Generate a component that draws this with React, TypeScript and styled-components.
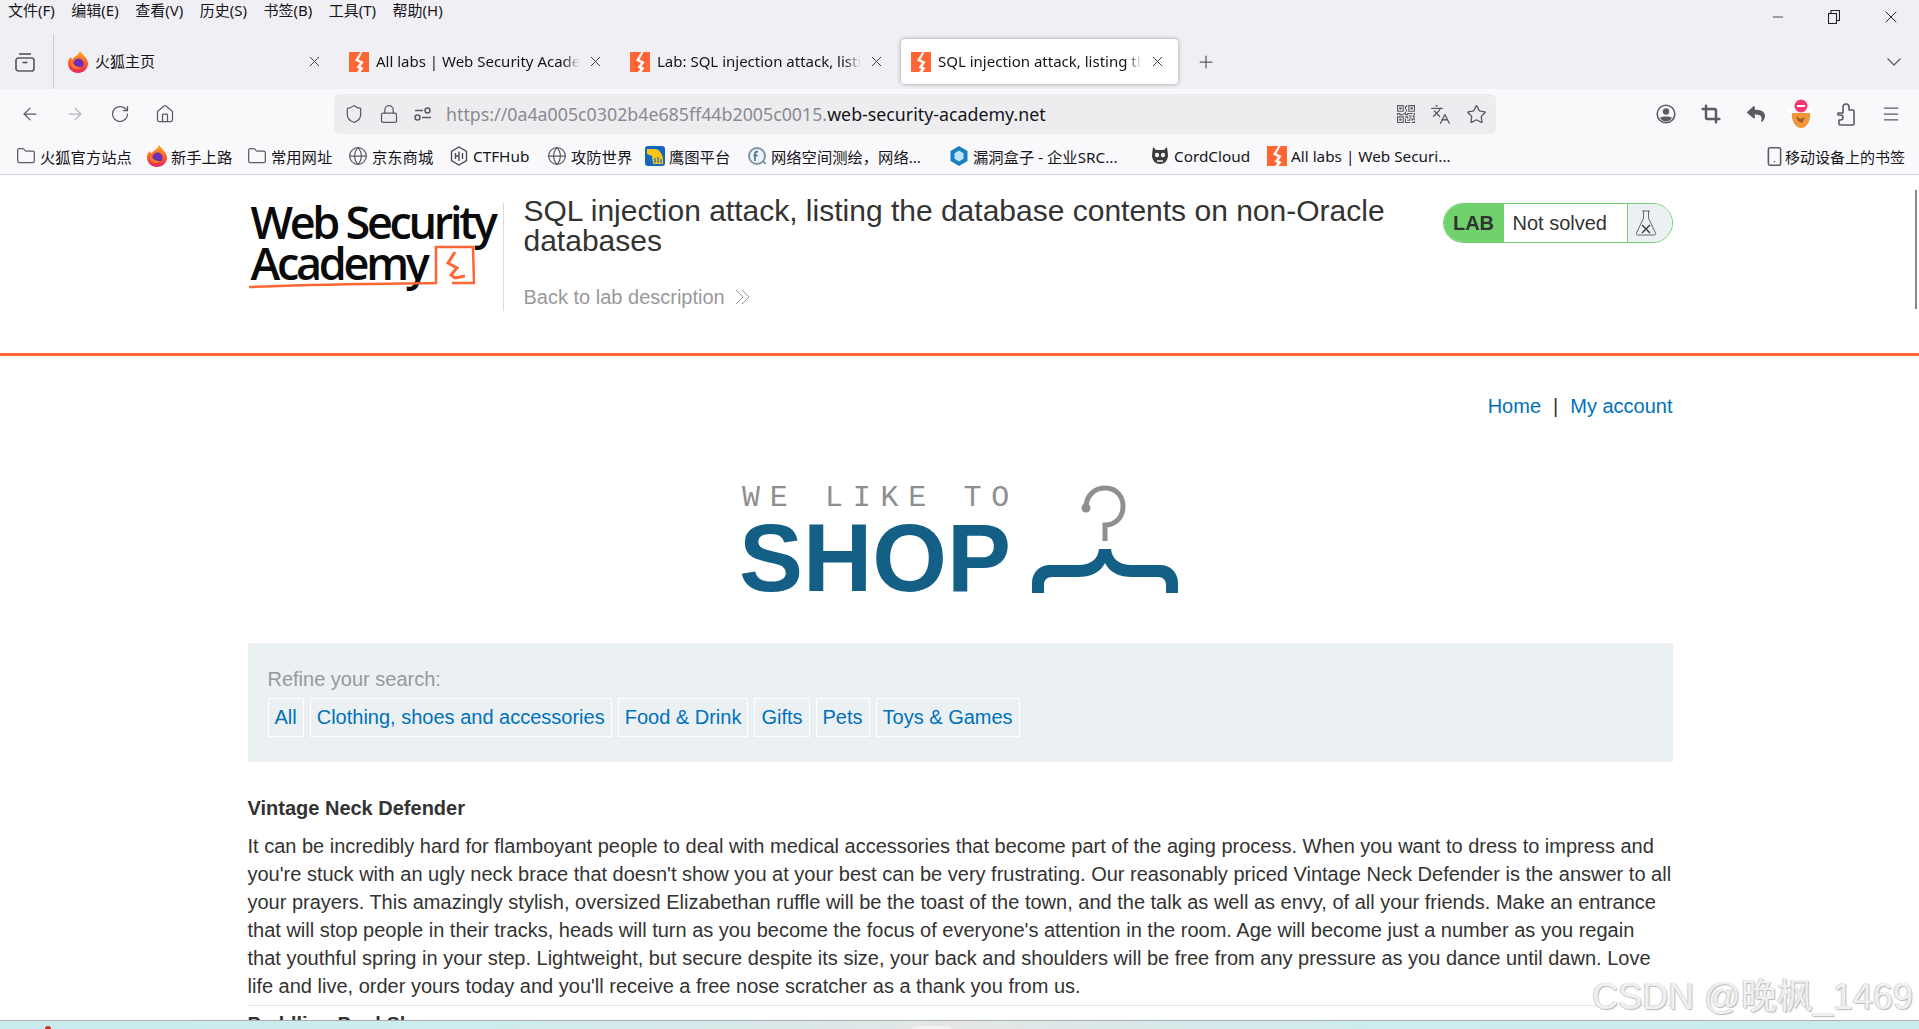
import React from 'react'
import styled, { createGlobalStyle } from 'styled-components'
import {
  ArrowLeft, ArrowRight, RotateCw, Home, Shield, Lock, Star, Languages, X, Plus,
  ChevronDown, Menu, Minus, Folder, Globe, Smartphone, Crop,
} from 'lucide-react'
import { FaReply } from 'react-icons/fa'
import { BsQrCode } from 'react-icons/bs'

const CHROME_FONT = `"Noto Sans", "Noto Sans CJK SC", sans-serif`
const PAGE_FONT = `"Liberation Sans", Arial, sans-serif`

const GlobalStyle = createGlobalStyle`
  html, body {
    margin: 0;
    padding: 0;
    height: 100%;
    overflow: hidden;
    background: #fff;
  }
  #root { height: 100%; }
`

const menus = ['文件(F)', '编辑(E)', '查看(V)', '历史(S)', '书签(B)', '工具(T)', '帮助(H)']
const categories = ['All', 'Clothing, shoes and accessories', 'Food & Drink', 'Gifts', 'Pets', 'Toys & Games']

const FoxIcon = () => (
  <svg width='20' height='22' viewBox='0 0 20 22'>
    <defs>
      <linearGradient id='foxBody' x1='0' y1='0' x2='0' y2='1'>
        <stop offset='0' stopColor='#ffb01f' />
        <stop offset='0.55' stopColor='#ff5a2b' />
        <stop offset='1' stopColor='#e0285f' />
      </linearGradient>
    </defs>
    <path d='M12 0c1 2 3 3 4.500 5.500C18.800 8 20 10 20 12.500 20 18 15.500 22 10 22S0 18 0 12.500C0 9.500 1.500 7 3 6c0 1 .5 2 1.500 2.500C6 5.500 10 5 12 0z' fill='url(#foxBody)' />
    <circle cx='10.500' cy='12.500' r='5' fill='#6b2fb5' />
    <path d='M3 9c2 4 5 8 11 7-3 3-9 3-11-2z' fill='#ff7a1f' />
  </svg>
)

const AcademyFavicon = () => (
  <svg width='20' height='20' viewBox='0 0 20 20'>
    <rect width='20' height='20' fill='#ff6633' />
    <path d='M11.500 0 6 8.500l5 2.500-3.500 4.500 3 1.500L8 20h3.500l3-4-3-1.500 3-4.500-5-2.500L13.500 0z' fill='#fff' />
  </svg>
)

const TabListIcon = () => (
  <svg width='20' height='20' viewBox='0 0 20 20' fill='none' stroke='#5b5b66' strokeWidth='1.700'>
    <path d='M4 2h12' />
    <rect x='1' y='6' width='18' height='13' rx='2.500' />
    <path d='M7.500 10.500h5' />
  </svg>
)

const SlidersIcon = () => (
  <svg width='18' height='14' viewBox='0 0 18 14' fill='none' stroke='#5b5b66' strokeWidth='1.500'>
    <circle cx='13.500' cy='3.500' r='2.500' />
    <path d='M1 3.500h8' />
    <circle cx='3.500' cy='10.500' r='2.500' />
    <path d='M8 10.500h9' />
  </svg>
)

const RestoreIcon = () => (
  <svg width='12' height='14' viewBox='0 0 12 14' fill='none' stroke='#222' strokeWidth='1.100'>
    <rect x='.5' y='3.500' width='8' height='10' />
    <path d='M3 3.500V.5h8.500v10H8.500' />
  </svg>
)

const AvatarIcon = () => (
  <svg width='20' height='20' viewBox='0 0 20 20'>
    <circle cx='10' cy='10' r='8.800' fill='none' stroke='#5b5b66' strokeWidth='1.600' />
    <circle cx='10' cy='7.500' r='3.200' fill='#5b5b66' />
    <path d='M4 13.500c2-1.500 10-1.500 12 0-1 2.500-3.500 4-6 4s-5-1.500-6-4z' fill='#5b5b66' />
  </svg>
)

const ExtensionIcon = () => (
  <svg width='20' height='24' viewBox='0 0 20 24' fill='none' stroke='#5b5b66' strokeWidth='1.600' strokeLinejoin='round'>
    <path d='M2 11h5V5a3 3 0 0 1 6 0v3h4c.6 0 1 .4 1 1v13c0 .6-.4 1-1 1H4c-.6 0-1-.4-1-1v-4h1.500a2.500 2.500 0 0 0 0-5H2z' />
  </svg>
)

const CtfIcon = () => (
  <svg width='18' height='20' viewBox='0 0 18 20' fill='none' stroke='#4a4a52' strokeWidth='1.400'>
    <path d='M9 1l7.500 4.300v9.400L9 19l-7.500-4.300V5.300z' />
    <path d='M5.500 7v6M9 5.500V15M12.500 7v6M5.500 10h3.500' />
  </svg>
)

const AddonIcon = () => (
  <svg width='24' height='32' viewBox='0 0 24 32'>
    <path d='M3 15h18c1 7-3 15-9 15S2 22 3 15z' fill='#f0973a' />
    <path d='M7 18l4 3 5-2-3 6-4-2z' fill='#9a5a20' />
    <rect x='0' y='9' width='24' height='6' fill='#fff' />
    <circle cx='12' cy='8' r='6.500' fill='#f7396f' />
    <rect x='8' y='7' width='8' height='2' fill='#fff' />
  </svg>
)

const YingtuIcon = () => (
  <svg width='20' height='20' viewBox='0 0 20 20'>
    <rect width='20' height='20' rx='3' fill='#1665c1' />
    <path d='M2 3h9c4 1 6 5 7 9v6H8l-1-8-5-2z' fill='#f5c518' />
    <path d='M10 12v5M13 11v6M16 13v4' stroke='#1665c1' strokeWidth='1.200' />
  </svg>
)

const FofaIcon = () => (
  <svg width='20' height='20' viewBox='0 0 20 20'>
    <circle cx='10' cy='10' r='8' fill='#eef3f5' stroke='#7d97a5' strokeWidth='2' />
    <path d='M8 15V7.500c0-1.500 1-2 3-2M6.500 9.500h4' fill='none' stroke='#4f7d96' strokeWidth='1.800' />
    <path d='M16 15l2.500 3' stroke='#7d97a5' strokeWidth='2' />
  </svg>
)

const BoxIcon = () => (
  <svg width='18' height='20' viewBox='0 0 18 20'>
    <path d='M9 0l8.500 5v10L9 20 .5 15V5z' fill='#1c7fc4' />
    <path d='M9 4.500l4.500 2.700v5.600L9 15.500l-4.500-2.700V7.200z' fill='#bfe6f7' />
  </svg>
)

const CordIcon = () => (
  <svg width='18' height='20' viewBox='0 0 18 20'>
    <path d='M2 1l3 3h8l3-3 1 8c0 5-3 9-8 9s-8-4-8-9z' fill='#3b3b3b' />
    <circle cx='6' cy='9' r='2.200' fill='#eee' />
    <circle cx='12' cy='9' r='2.200' fill='#eee' />
    <path d='M6 14h6v2H6z' fill='#ccc' />
  </svg>
)

const chromeIcon = { size: 20, color: '#5b5b66', strokeWidth: 1.500 }
const bookmarkIcon = { size: 20, color: '#5b5b66', strokeWidth: 1.500 }

const bookmarks = [
  { label: '火狐官方站点', width: 131, icon: <Folder {...bookmarkIcon} /> },
  { label: '新手上路', width: 100, icon: <FoxIcon /> },
  { label: '常用网址', width: 101, icon: <Folder {...bookmarkIcon} /> },
  { label: '京东商城', width: 101, icon: <Globe {...bookmarkIcon} /> },
  { label: 'CTFHub', width: 98, icon: <CtfIcon /> },
  { label: '攻防世界', width: 98, icon: <Globe {...bookmarkIcon} /> },
  { label: '鹰图平台', width: 102, icon: <YingtuIcon /> },
  { label: '网络空间测绘，网络...', width: 202, icon: <FofaIcon /> },
  { label: '漏洞盒子 - 企业SRC...', width: 201, icon: <BoxIcon /> },
  { label: 'CordCloud', width: 117, icon: <CordIcon /> },
  { label: 'All labs | Web Securi...', width: 190, icon: <AcademyFavicon /> },
]

const tabs = [
  { title: '火狐主页', icon: <FoxIcon />, fade: false },
  { title: 'All labs | Web Security Academy', icon: <AcademyFavicon />, fade: true },
  { title: 'Lab: SQL injection attack, listing', icon: <AcademyFavicon />, fade: true },
  { title: 'SQL injection attack, listing the', icon: <AcademyFavicon />, fade: true, active: true },
]

const App = (): JSX.Element => {
  return (
    <Screen>
      <GlobalStyle />

      <Chrome>
        <TitleRow>
          <MenuBar>
            {menus.map((m) => <MenuItem key={m}>{m}</MenuItem>)}
          </MenuBar>
          <WindowControls>
            <WindowButton><Minus size={16} color='#222' strokeWidth={1.200} /></WindowButton>
            <WindowButton><RestoreIcon /></WindowButton>
            <WindowButton><X size={20} color='#222' strokeWidth={1.200} /></WindowButton>
          </WindowControls>
        </TitleRow>

        <TabRow>
          <TabListButton><TabListIcon /></TabListButton>
          <TabStrip>
            {tabs.map((t) => (
              <Tab key={t.title} $active={t.active}>
                <TabIcon>{t.icon}</TabIcon>
                <TabTitle $fade={t.fade}>{t.title}</TabTitle>
                <X size={17} color='#3a3a42' strokeWidth={1.400} />
              </Tab>
            ))}
          </TabStrip>
          <NewTab><Plus size={20} color='#5b5b66' strokeWidth={1.500} /></NewTab>
          <TabOverflow><ChevronDown size={24} color='#5b5b66' strokeWidth={1.300} /></TabOverflow>
        </TabRow>

        <Toolbar>
          <NavGroup>
            <NavButton><ArrowLeft {...chromeIcon} /></NavButton>
            <NavButton><ArrowRight {...chromeIcon} color='#b4b4ba' /></NavButton>
            <NavButton><RotateCw {...chromeIcon} /></NavButton>
            <NavButton><Home {...chromeIcon} /></NavButton>
          </NavGroup>
          <UrlBar>
            <UrlIcons>
              <Shield size={20} color='#5b5b66' strokeWidth={1.500} />
              <Lock size={20} color='#5b5b66' strokeWidth={1.500} />
              <SlidersIcon />
            </UrlIcons>
            <UrlText>
              <UrlMuted>https://0a4a005c0302b4e685ff44b2005c0015.</UrlMuted>web-security-academy.net
            </UrlText>
            <UrlActions>
              <BsQrCode size={18} color='#5b5b66' />
              <Languages size={21} color='#5b5b66' strokeWidth={1.500} />
              <Star size={21} color='#5b5b66' strokeWidth={1.500} />
            </UrlActions>
          </UrlBar>
          <ToolActions>
            <ToolButton><AvatarIcon /></ToolButton>
            <ToolButton><Crop size={20} color='#5b5b66' strokeWidth={3} /></ToolButton>
            <ToolButton><FaReply size={18} color='#5b5b66' /></ToolButton>
            <ToolButton><AddonIcon /></ToolButton>
            <ToolButton><ExtensionIcon /></ToolButton>
            <ToolButton><Menu {...chromeIcon} /></ToolButton>
          </ToolActions>
        </Toolbar>

        <BookmarkBar>
          <BookmarkList>
            {bookmarks.map((b) => (
              <Bookmark key={b.label} $width={b.width}>
                <BookmarkIcon>{b.icon}</BookmarkIcon>
                {b.label}
              </Bookmark>
            ))}
          </BookmarkList>
          <MobileBookmarks>
            <Smartphone size={21} color='#5b5b66' strokeWidth={1.800} />
            移动设备上的书签
          </MobileBookmarks>
        </BookmarkBar>
      </Chrome>

      <Page>
        <AcademyHeader>
          <HeaderInner>
            <LogoBlock>
              <Logo>
                <LogoLine>Web Security</LogoLine>
                <LogoLine>Academy</LogoLine>
                <LogoMark width='226' height='44' viewBox='0 0 226 44' fill='none'>
                  <path d='M0 42c60-3 125-3 187-4V2h37l1 36h-22' stroke='#ff6633' strokeWidth='2.500' />
                  <path d='M206 7l-7 11 9 5-6 7 4 3 10-2' stroke='#ff6633' strokeWidth='3' />
                </LogoMark>
              </Logo>
              <LogoDivider />
            </LogoBlock>
            <TitleBlock>
              <LabTitle>SQL injection attack, listing the database contents on non-Oracle databases</LabTitle>
              <BackLink>
                Back to lab description
                <svg width='16' height='16' viewBox='0 0 16 16' fill='none' stroke='#999' strokeWidth='1'>
                  <path d='M1 1l7 7-7 7M7 1l7 7-7 7' />
                </svg>
              </BackLink>
            </TitleBlock>
            <LabBadge>
              <LabTag>LAB</LabTag>
              <LabState>Not solved</LabState>
              <LabFlask>
                <svg width='22' height='26' viewBox='0 0 22 26' fill='none' stroke='#666' strokeWidth='1'>
                  <path d='M7 1h8M8.500 1v7L1.500 23c-.5 1 0 2 1 2h17c1 0 1.500-1 1-2l-7-15V1' />
                  <path d='M7 15l8 8M15 15l-8 8' stroke='#333' strokeWidth='1.300' />
                </svg>
              </LabFlask>
            </LabBadge>
          </HeaderInner>
        </AcademyHeader>

        <Container>
          <TopLinks>
            <TopLink>Home</TopLink>
            <TopSep>|</TopSep>
            <TopLink>My account</TopLink>
          </TopLinks>

          <ShopLogo>
            <ShopWords>
              <ShopSmall>WE LIKE TO</ShopSmall>
              <ShopBig>SHOP</ShopBig>
            </ShopWords>
            <svg width='146' height='108' viewBox='0 0 146 108'>
              <circle cx='54' cy='23' r='4.500' fill='#8f8f8f' />
              <path d='M54 23C54 10 63 3 73 3c12 0 18 9 18 18 0 12-8 19-18 19v16' fill='none' stroke='#8f8f8f' strokeWidth='5' />
              <path d='M67 64h12c1 10 8 16 21 16h28c11 0 18 8 18 18v10h-12v-8c0-5-3-8-8-8h-26c-12 0-22-4-27-14-5 10-15 14-27 14H20c-5 0-8 3-8 8v8H0V98c0-10 7-18 18-18h28c13 0 20-6 21-16z' fill='#135f85' />
            </svg>
          </ShopLogo>

          <FilterBox>
            <FilterLabel>Refine your search:</FilterLabel>
            <FilterList>
              {categories.map((c) => <FilterLink key={c}>{c}</FilterLink>)}
            </FilterList>
          </FilterBox>

          <ProductName>Vintage Neck Defender</ProductName>
          <ProductText>
            It can be incredibly hard for flamboyant people to deal with medical accessories that become part of the aging process. When you want to dress to impress and you're stuck with an ugly neck brace that doesn't show you at your best can be very frustrating. Our reasonably priced Vintage Neck Defender is the answer to all your prayers. This amazingly stylish, oversized Elizabethan ruffle will be the toast of the town, and the talk as well as envy, of all your friends. Make an entrance that will stop people in their tracks, heads will turn as you become the focus of everyone's attention in the room. Age will become just a number as you regain that youthful spring in your step. Lightweight, but secure despite its size, your back and shoulders will be free from any pressure as you dance until dawn. Love life and live, order yours today and you'll receive a free nose scratcher as a thank you from us.
          </ProductText>
          <Rule />
          <NextProduct>Paddling Pool Shoes</NextProduct>
        </Container>

        <ScrollThumb />
        <Watermark>CSDN @晚枫_1469</Watermark>
      </Page>

      <Taskbar>
        <TaskbarDot />
        <TaskbarTab />
      </Taskbar>
    </Screen>
  )
}

export default App

const Screen = styled.div`
  height: 100vh;
  display: flex;
  flex-direction: column;
  overflow: hidden;
`

const Chrome = styled.header`
  flex: none;
  background: #f0f0f4;
  font-family: ${CHROME_FONT};
  color: #15141a;
`

const TitleRow = styled.div`
  height: 34px;
  display: flex;
  justify-content: space-between;
`

const MenuBar = styled.nav`
  display: flex;
  gap: 16.500px;
  padding-left: 8px;
  height: 18px;
  align-items: center;
`

const MenuItem = styled.span`
  font-size: 15px;
  white-space: nowrap;
`

const WindowControls = styled.div`
  display: flex;
  align-items: center;
`

const WindowButton = styled.div`
  width: 56.500px;
  height: 34px;
  display: flex;
  align-items: center;
  justify-content: center;
`

const TabRow = styled.div`
  height: 55px;
  display: flex;
  align-items: flex-start;
`

const TabListButton = styled.div`
  width: 49px;
  height: 55px;
  padding-right: 4px;
  display: flex;
  align-items: center;
  justify-content: center;
  border-right: 1px solid #c9c9cf;
`

const TabStrip = styled.div`
  display: flex;
  gap: 4px;
  padding: 5px 0 0 4px;
`

const Tab = styled.div<{ $active?: boolean }>`
  width: 277px;
  height: 45px;
  box-sizing: border-box;
  padding: 0 12px 0 10px;
  display: flex;
  align-items: center;
  gap: 7px;
  border-radius: 4px;
  background: ${({ $active }) => ($active ? '#fff' : 'transparent')};
  box-shadow: ${({ $active }) => ($active ? '0 0 4px rgba(0, 0, 0, 0.35)' : 'none')};
`

const TabIcon = styled.span`
  flex: none;
  width: 20px;
  height: 22px;
  display: flex;
  align-items: center;
`

const TabTitle = styled.span<{ $fade?: boolean }>`
  flex: 1;
  min-width: 0;
  font-size: 15px;
  line-height: 22px;
  margin-top: -2px;
  white-space: nowrap;
  overflow: hidden;
  ${({ $fade }) => $fade && `
    mask-image: linear-gradient(to right, #000 92%, transparent 100%);
  `}
`

const NewTab = styled.div`
  margin-left: 18px;
  height: 55px;
  display: flex;
  align-items: center;
`

const TabOverflow = styled.div`
  margin-left: auto;
  width: 50px;
  height: 55px;
  display: flex;
  align-items: center;
  justify-content: center;
`

const Toolbar = styled.div`
  height: 50px;
  padding: 5px 0;
  box-sizing: border-box;
  background: #f9f9fb;
  display: flex;
  align-items: center;
`

const NavGroup = styled.div`
  width: 334px;
  display: flex;
  padding-left: 8px;
  box-sizing: border-box;
`

const NavButton = styled.div`
  width: 44.800px;
  height: 40px;
  display: flex;
  align-items: center;
  justify-content: center;
`

const UrlBar = styled.div`
  width: 1162px;
  height: 40px;
  border-radius: 6px;
  background: #ededf0;
  display: flex;
  align-items: center;
`

const UrlIcons = styled.div`
  display: flex;
  align-items: center;
  gap: 15px;
  padding-left: 10px;
  width: 112px;
  box-sizing: border-box;
`

const UrlText = styled.div`
  flex: 1;
  font-size: 17.800px;
  white-space: nowrap;
`

const UrlMuted = styled.span`
  color: #8a8a90;
`

const UrlActions = styled.div`
  display: flex;
  align-items: center;
  gap: 15px;
  padding-right: 9px;
`

const ToolActions = styled.div`
  flex: 1;
  display: flex;
  justify-content: flex-end;
  align-items: center;
  padding-right: 6px;
`

const ToolButton = styled.div`
  width: 45px;
  height: 40px;
  display: flex;
  align-items: center;
  justify-content: center;
`

const BookmarkBar = styled.div`
  height: 36px;
  padding: 0 14px 1px 16px;
  box-sizing: border-box;
  background: #f9f9fb;
  border-bottom: 1px solid #cfcfd8;
  display: flex;
  align-items: center;
  justify-content: space-between;
  font-size: 15.300px;
`

const BookmarkList = styled.div`
  display: flex;
`

const Bookmark = styled.div<{ $width: number }>`
  width: ${({ $width }) => $width}px;
  display: flex;
  align-items: center;
  gap: 4px;
  white-space: nowrap;
`

const BookmarkIcon = styled.span`
  flex: none;
  width: 20px;
  display: flex;
  justify-content: center;
`

const MobileBookmarks = styled.div`
  display: flex;
  align-items: center;
  white-space: nowrap;
  font-size: 15px;
`

const Page = styled.main`
  position: relative;
  flex: 1;
  min-height: 0;
  overflow: hidden;
  background: #fff;
  font-family: ${PAGE_FONT};
  font-size: 20px;
  color: #333332;
`

const AcademyHeader = styled.section`
  height: 181px;
  box-sizing: border-box;
  border-bottom: 3px solid #ff6633;
  padding-top: 21px;
`

const HeaderInner = styled.div`
  width: 1425px;
  margin-left: 247.500px;
  display: flex;
  align-items: flex-start;
`

const LogoBlock = styled.div`
  flex: none;
  width: 256px;
  display: flex;
  justify-content: space-between;
  padding-top: 7px;
`

const Logo = styled.div`
  position: relative;
  padding: 0 0 0 3px;
  font-family: "Open Sans", sans-serif;
  font-weight: 600;
  color: #0a0a0a;
`

const LogoLine = styled.div`
  font-size: 45px;
  line-height: 41px;
  letter-spacing: -3.300px;
  white-space: nowrap;
  position: relative;
  top: -2px;
`

const LogoMark = styled.svg`
  position: absolute;
  left: 1px;
  top: 42px;
`

const LogoDivider = styled.div`
  width: 1px;
  height: 108px;
  background: #dcdcdc;
`

const TitleBlock = styled.div`
  flex: 1;
  padding-left: 20px;
`

const LabTitle = styled.h2`
  margin: 0;
  font-size: 30px;
  line-height: 30px;
  font-weight: 400;
  max-width: 880px;
`

const BackLink = styled.div`
  margin-top: 29px;
  line-height: 24px;
  color: #999;
  display: flex;
  align-items: center;
  gap: 10px;
`

const LabBadge = styled.div`
  flex: none;
  margin-top: 7px;
  width: 230px;
  height: 40px;
  box-sizing: border-box;
  border: 1px solid #70d16d;
  border-radius: 20px;
  overflow: hidden;
  display: flex;
`

const LabTag = styled.div`
  width: 60px;
  background: #70d16d;
  font-weight: 700;
  text-align: center;
  line-height: 38px;
`

const LabState = styled.div`
  flex: 1;
  padding-left: 9px;
  line-height: 38px;
`

const LabFlask = styled.div`
  width: 45px;
  border-left: 1px solid #70d16d;
  background: #ebf0f2;
  display: flex;
  align-items: center;
  padding-left: 7px;
  box-sizing: border-box;
`

const Container = styled.div`
  width: 1425px;
  margin-left: 247.500px;
`

const TopLinks = styled.nav`
  margin-top: 38px;
  display: flex;
  justify-content: flex-end;
  gap: 12px;
  line-height: 24px;
`

const TopLink = styled.a`
  color: #0071bc;
`

const TopSep = styled.span`
  color: #333332;
`

const ShopLogo = styled.div`
  margin-top: 67px;
  display: flex;
  justify-content: center;
  align-items: flex-start;
  gap: 23px;
`

const ShopWords = styled.div`
  width: 267px;
`

const ShopSmall = styled.div`
  font-family: "Liberation Mono", monospace;
  font-size: 30px;
  line-height: 26px;
  letter-spacing: 9.700px;
  color: #8f8f8f;
  white-space: nowrap;
`

const ShopBig = styled.div`
  margin: 6px 0 0 -3px;
  font-weight: 700;
  font-size: 96px;
  line-height: 82px;
  color: #135f85;
`

const FilterBox = styled.section`
  margin-top: 44px;
  padding: 24px 20px 25px;
  background: #ebf0f2;
`

const FilterLabel = styled.div`
  color: #999;
  line-height: 24px;
`

const FilterList = styled.div`
  margin-top: 7px;
  display: flex;
  gap: 6px;
`

const FilterLink = styled.a`
  height: 39px;
  box-sizing: border-box;
  padding: 0 6px;
  border: 1px solid #fff;
  color: #0071bc;
  line-height: 37px;
  white-space: nowrap;
`

const ProductName = styled.h3`
  margin: 34px 0 0;
  font-size: 20px;
  line-height: 24px;
  font-weight: 700;
`

const ProductText = styled.p`
  margin: 12px 0 0;
  line-height: 28px;
`

const Rule = styled.hr`
  margin: 5px 0 0;
  border: 0;
  border-top: 1px solid #e6e6e6;
`

const NextProduct = styled.h3`
  margin: 6px 0 0;
  font-size: 20px;
  line-height: 24px;
  font-weight: 700;
`

const ScrollThumb = styled.div`
  position: absolute;
  right: 2px;
  top: 15px;
  width: 2px;
  height: 119px;
  background: #888;
`

const Watermark = styled.div`
  position: absolute;
  right: 6px;
  bottom: 2px;
  font-family: ${PAGE_FONT}, "Noto Sans CJK SC";
  font-size: 36px;
  line-height: 42px;
  color: #f0f0f0;
  text-shadow: 1px 1px 1px #b8b8b8, -1px 0 1px #cfcfcf;
  white-space: nowrap;
`

const Taskbar = styled.footer`
  position: relative;
  flex: none;
  height: 9px;
  box-sizing: border-box;
  border-top: 1px solid #a9b0b3;
  background: linear-gradient(90deg, #c9ebed 0%, #cdeced 25%, #e4e6e6 50%, #cdeced 72%, #c9ebed 100%);
  overflow: hidden;
`

const TaskbarDot = styled.div`
  position: absolute;
  left: 45px;
  top: 5px;
  width: 6px;
  height: 6px;
  border-radius: 50%;
  background: #d8352a;
`

const TaskbarTab = styled.div`
  position: absolute;
  left: 912px;
  top: 5px;
  width: 40px;
  height: 8px;
  border-radius: 4px;
  background: #f2f2f2;
`
